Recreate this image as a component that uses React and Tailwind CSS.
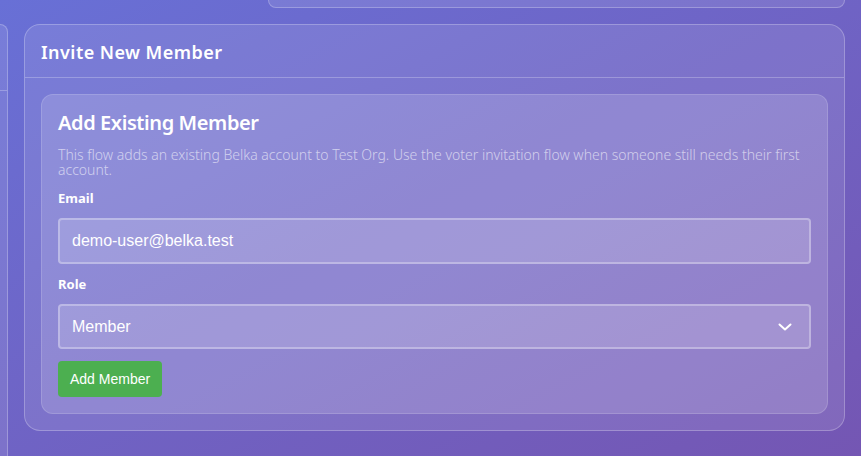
import React from "react";

function Chevron() {
  return (
    <svg width="16" height="16" viewBox="0 0 16 16" fill="none" className="shrink-0">
      <polyline points="2.5,5.5 8,10.5 13.5,5.5" stroke="white" strokeWidth="2" strokeLinecap="round" strokeLinejoin="round" />
    </svg>
  );
}

export default function App() {
  const head = { fontFamily: '"Noto Sans", "Open Sans", sans-serif' };
  const arial = { fontFamily: '"Liberation Sans", Arial, sans-serif' };
  return (
    <div className="w-[861px] h-[456px] overflow-hidden flex bg-gradient-to-br from-[#6870d6] to-[#7456b3]" style={head}>
      {/* left cropped panel */}
      <div className="w-[8px] shrink-0 mt-[24px] flex flex-col rounded-tr-2xl border-t border-r border-white/25 bg-white/10">
        <div className="h-[66px] border-b border-white/25" />
      </div>

      {/* main column */}
      <div className="ml-[16px] w-[821px] flex flex-col">
        <div className="flex justify-end">
          <div className="w-[577px] h-[8px] rounded-b-2xl border-b border-l border-r border-white/25 bg-white/10" />
        </div>

        <div className="mt-[16px] rounded-2xl border border-white/25 bg-white/10 flex flex-col">
          <div className="h-[53px] border-b border-white/25 px-[16px] flex items-center">
            <h2 className="text-white text-[18px] font-semibold leading-[24px] pt-[1px] tracking-[0.45px]">Invite New Member</h2>
          </div>
          <div className="p-[16px]">
            <div className="rounded-xl border border-white/15 bg-white/15 px-[16px] pt-[16px] pb-[16px]">
              <h3 className="text-white text-[20px] font-semibold leading-[24px] tracking-[-0.4px]">Add Existing Member</h3>
              <p className="mt-[12px] text-white/60 text-[14px] font-light leading-[15px]">
                This flow adds an existing Belka account to Test Org. Use the voter invitation flow when someone still needs their first account.
              </p>
              <label className="block mt-[13px] text-white text-[13px] font-bold leading-[16px]">Email</label>
              <div className="mt-[12px] h-[46px] rounded border-2 border-white/30 bg-white/15 px-[12px] flex items-center text-white text-[16px]" style={arial}>
                demo-user@belka.test
              </div>
              <label className="block mt-[12px] text-white text-[13px] font-bold leading-[16px]">Role</label>
              <div className="mt-[12px] h-[45px] rounded border-2 border-white/30 bg-white/15 pl-[12px] pr-[16px] flex items-center justify-between text-white text-[16px]" style={arial}>
                <span>Member</span>
                <Chevron />
              </div>
              <button className="mt-[12px] h-[36px] px-[12px] rounded bg-[#4caf50] text-white text-[14px]" style={arial}>
                Add Member
              </button>
            </div>
          </div>
        </div>
      </div>
    </div>
  );
}
